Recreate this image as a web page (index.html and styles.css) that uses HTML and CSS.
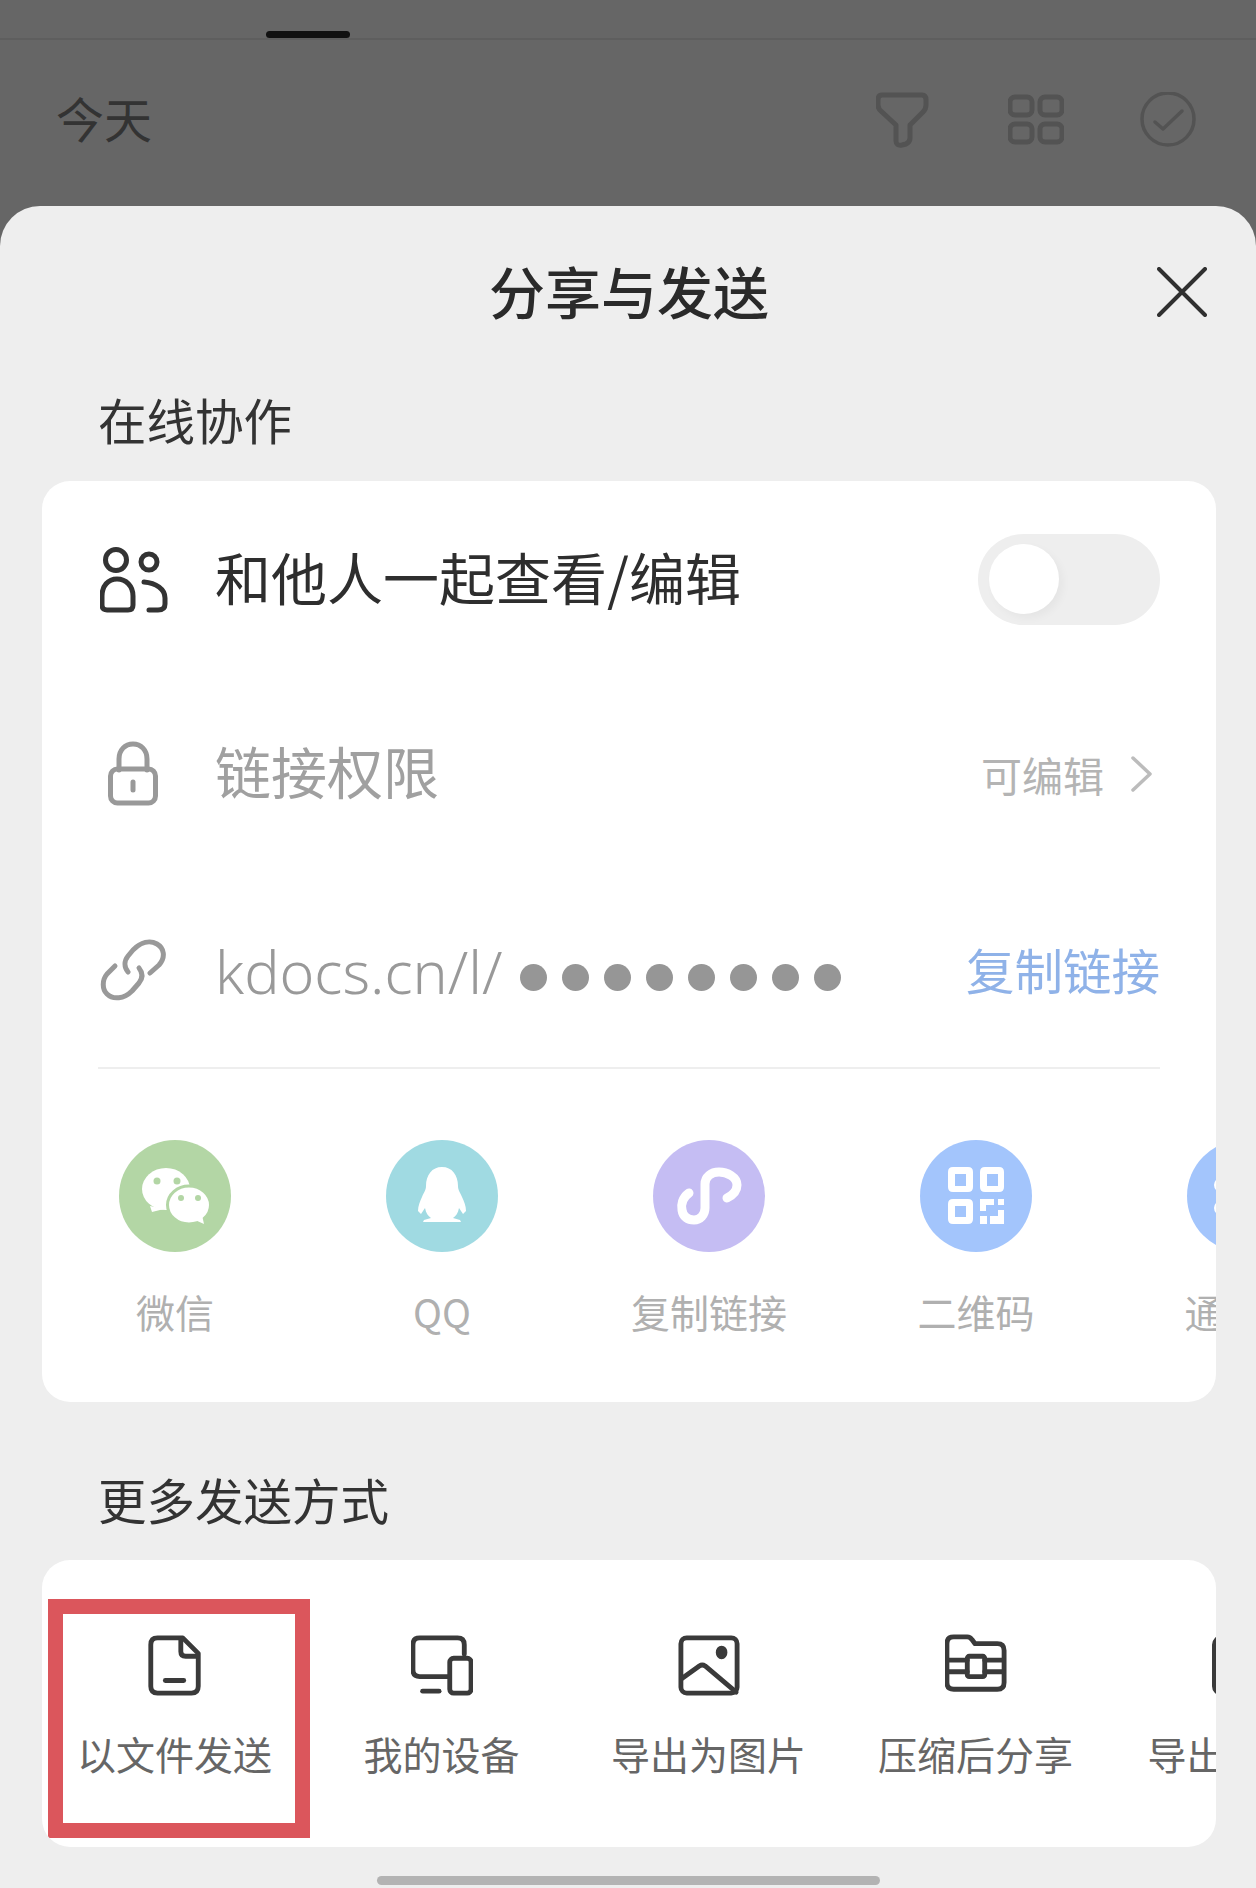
FILE: index.html
```html
<!DOCTYPE html>
<html lang="zh-CN">
<head>
<meta charset="UTF-8">
<meta name="viewport" content="width=device-width, initial-scale=1.0">
<title>分享与发送</title>
<link rel="stylesheet" href="styles.css">
</head>
<body>

<div class="backdrop">
    <div class="tab-strip"><span class="tab-mark"></span></div>
    <div class="top-bar">
        <span class="top-title">今天</span>
        <div class="top-icons">
            <svg class="top-icon thick" viewBox="0 0 56 56"><path d="M6 3H46Q50 3 50 8V13Q50 17 47 20L34 33V46Q34 50 30 52L26 53Q20 54 20 49V33L6 20Q2 17 2 13V8Q2 3 6 3Z"/></svg>
            <svg class="top-icon thick" viewBox="0 0 56 56"><rect x="2" y="5" width="22" height="18" rx="5"/><rect x="32" y="5" width="22" height="18" rx="5"/><rect x="2" y="32" width="22" height="18" rx="5"/><rect x="32" y="32" width="22" height="18" rx="5"/></svg>
            <svg class="top-icon" viewBox="0 0 56 56"><circle cx="28" cy="27" r="26"/><path d="M15 30L23 37L42 19"/></svg>
        </div>
    </div>
</div>

<section class="sheet">
    <header class="sheet-head">
        <h1>分享与发送</h1>
        <svg class="close-icon" viewBox="0 0 50 50"><path d="M2 2L48 48M48 2L2 48"/></svg>
    </header>

    <h2 class="section-title first">在线协作</h2>
    <div class="card">
        <div class="row row-first">
            <svg class="row-icon dark" viewBox="0 0 68 68"><circle cx="16" cy="14" r="10.5"/><circle cx="49" cy="16" r="8"/><path d="M2 59V50C2 40 8 33 17 33C26 33 33 40 33 50V59Q33 64 28 64H7Q2 64 2 59Z"/><path d="M44 36C56 37 65 43 65 52V58Q65 64 58 64H49"/></svg>
            <span class="row-label strong">和他人一起查看/编辑</span>
            <span class="toggle"><span class="knob"></span></span>
        </div>
        <div class="row row-second">
            <svg class="row-icon" viewBox="0 0 68 68"><path d="M19 30V19C19 10 25 4 33 4C41 4 47 10 47 19V30"/><rect x="10.5" y="29" width="45" height="34" rx="7"/><path d="M33 42V50"/></svg>
            <span class="row-label">链接权限</span>
            <span class="row-value">可编辑</span>
            <svg class="chevron" viewBox="0 0 22 36"><path d="M2 2L19 18L2 34"/></svg>
        </div>
        <div class="row row-third">
            <svg class="row-icon" viewBox="0 0 68 68"><path d="M50 34L59 26C66 18 64 9 57 5C50 1 41 3 33 11L28 17C24 22 24 28 28 33"/><path d="M15 27L7 35C2 41 2 50 7 55C13 61 24 60 32 52L39 44C43 39 43 34 39 29"/></svg>
            <span class="row-label link-text">kdocs.cn/l/</span>
            <span class="link-dots"><i></i><i></i><i></i><i></i><i></i><i></i><i></i><i></i></span>
            <span class="copy-link">复制链接</span>
        </div>
        <div class="divider"></div>
        <div class="share-row">
            <div class="share-item">
                <span class="share-circle green">
                    <svg viewBox="0 0 112 112"><ellipse cx="47" cy="49" rx="24" ry="21" fill="#fff"/><path d="M31 66L33 72L45 69Z" fill="#fff"/><ellipse cx="70" cy="65" rx="21.5" ry="19" fill="#fff" stroke="#b3d6a5" stroke-width="3"/><path d="M76 80L85 84L83 75Z" fill="#fff"/><circle cx="38" cy="41" r="3.5" fill="#b3d6a5"/><circle cx="58" cy="41" r="3.5" fill="#b3d6a5"/><circle cx="62" cy="58" r="3" fill="#b3d6a5"/><circle cx="79" cy="58" r="3" fill="#b3d6a5"/></svg>
                </span>
                <span class="share-label">微信</span>
            </div>
            <div class="share-item">
                <span class="share-circle teal">
                    <svg viewBox="0 0 112 112"><path d="M56 27C46 27 40 35 40 46C40 50 38 52 36 57C34 61 32 66 32 71L35 74L39 68C40 73 42 76 45 78L38 80L37 82H75L74 80L67 78C70 76 72 73 73 68L77 74L80 71C80 66 78 61 76 57C74 52 72 50 72 46C72 35 66 27 56 27Z" fill="#fff"/></svg>
                </span>
                <span class="share-label">QQ</span>
            </div>
            <div class="share-item">
                <span class="share-circle purple">
                    <svg viewBox="0 0 112 112"><path d="M36 53C29 58 28 65 29 70C30 77 35 80 41 80C47 80 52 75 52 68V44C52 37 58 32 66 32C74 32 84 37 84 45C84 52 78 56 74 58" fill="none" stroke="#fff" stroke-width="9" stroke-linecap="round"/></svg>
                </span>
                <span class="share-label">复制链接</span>
            </div>
            <div class="share-item">
                <span class="share-circle blue">
                    <svg viewBox="0 0 112 112"><g class="qr-marks"><path fill-rule="evenodd" d="M33 27H48Q53 27 53 32V47Q53 52 48 52H33Q28 52 28 47V32Q28 27 33 27ZM35 34V46H46V34Z"/><path fill-rule="evenodd" d="M65 27H79Q84 27 84 32V47Q84 52 79 52H65Q60 52 60 47V32Q60 27 65 27ZM67 34V46H78V34Z"/><path fill-rule="evenodd" d="M33 59H48Q53 59 53 64V79Q53 84 48 84H33Q28 84 28 79V64Q28 59 33 59ZM35 66V77H46V66Z"/><path d="M60 59H74V65H66V71H60ZM78 59H84V65H78ZM78 70H84V84H70V76H78ZM60 76H67V84H60Z"/></g></svg>
                </span>
                <span class="share-label">二维码</span>
            </div>
            <div class="share-item">
                <span class="share-circle blue">
                    <svg viewBox="0 0 112 112"><circle cx="34" cy="45" r="7" fill="#fff"/><circle cx="34" cy="68" r="7" fill="#fff"/></svg>
                </span>
                <span class="share-label">通讯录</span>
            </div>
        </div>
    </div>

    <h2 class="section-title second">更多发送方式</h2>
    <div class="card more-card">
        <div class="more-row">
            <div class="more-item">
                <svg class="more-icon" viewBox="0 0 64 64"><path d="M14 4H40L56 20V54Q56 61 49 61H14Q7 61 7 54V11Q7 4 14 4Z"/><path d="M38 5V18Q38 23 43 23H55"/><path d="M22 48H41"/></svg>
                <span class="more-label">以文件发送</span>
            </div>
            <div class="more-item">
                <svg class="more-icon" viewBox="0 0 64 64"><path d="M55 21V11Q55 4 48 4H9Q2 4 2 11V37Q2 44 9 44H38"/><rect x="40" y="25" width="22" height="36" rx="4"/><path d="M12 59H29"/></svg>
                <span class="more-label">我的设备</span>
            </div>
            <div class="more-item">
                <svg class="more-icon" viewBox="0 0 64 64"><rect x="3" y="4" width="58" height="57" rx="6"/><path d="M4 46L22 33Q25 31 28 33L60 60"/><ellipse cx="45" cy="19" rx="3.5" ry="4.5" class="solid"/></svg>
                <span class="more-label">导出为图片</span>
            </div>
            <div class="more-item">
                <svg class="more-icon" viewBox="0 0 64 64"><path d="M9 3H23Q26 3 28 6L31 10H54Q61 10 61 17V50Q61 57 54 57H9Q2 57 2 50V10Q2 3 9 3Z"/><rect x="23" y="23" width="18" height="21" rx="2"/><path d="M3 27H23M3 39H23M41 27H60M41 39H60"/></svg>
                <span class="more-label">压缩后分享</span>
            </div>
            <div class="more-item">
                <svg class="more-icon" viewBox="0 0 64 64"><rect x="2.5" y="4" width="50" height="57" rx="7"/></svg>
                <span class="more-label">导出为PDF</span>
            </div>
        </div>
        <div class="highlight-box"></div>
    </div>

    <div class="home-bar"></div>
</section>

</body>
</html>
```

FILE: styles.css
```css
* {
    box-sizing: border-box;
}

html, body {
    margin: 0;
    padding: 0;
}

body {
    width: 1256px;
    height: 1888px;
    overflow: hidden;
    background-color: #666666;
    font-family: "Noto Sans CJK SC", "Noto Sans", sans-serif;
}

svg {
    display: block;
    fill: none;
}

/* dimmed page behind the sheet */
.backdrop {
    height: 206px;
}

.tab-strip {
    height: 40px;
    padding: 31px 0 0 266px;
    border-bottom: 2px solid #5e5e5e;
}

.tab-mark {
    display: block;
    width: 84px;
    height: 7px;
    border-radius: 4px;
    background-color: #111111;
}

.top-bar {
    display: flex;
    align-items: center;
    justify-content: space-between;
    height: 160px;
    padding: 0 60px 0 56px;
}

.top-title {
    margin-bottom: 6px;
    font-size: 48px;
    line-height: 60px;
    color: #333333;
}

.top-icons {
    display: flex;
    gap: 76px;
}

.top-icon {
    width: 56px;
    height: 56px;
    stroke: #535353;
    stroke-width: 3.5;
    stroke-linecap: round;
    stroke-linejoin: round;
}

.top-icon.thick {
    stroke-width: 5;
}

/* bottom sheet */
.sheet {
    position: relative;
    height: 1682px;
    padding: 0 40px 0 42px;
    border-radius: 40px 40px 0 0;
    background-color: #eeeeee;
}

.sheet-head {
    display: flex;
    align-items: center;
    justify-content: center;
    position: relative;
    height: 175px;
}

.sheet-head h1 {
    margin: 0 0 7px;
    font-size: 56px;
    line-height: 70px;
    font-weight: 500;
    color: #2a2a2a;
}

.close-icon {
    position: absolute;
    top: 61px;
    right: 9px;
    width: 50px;
    height: 50px;
    stroke: #2f2f2f;
    stroke-width: 4;
    stroke-linecap: round;
}

.section-title {
    margin: 0;
    padding-left: 56px;
    font-size: 48.5px;
    line-height: 60px;
    font-weight: 400;
    color: #333333;
}

.section-title.first {
    padding-top: 8px;
    height: 100px;
}

.section-title.second {
    padding-top: 67px;
    height: 158px;
}

.card {
    width: 1174px;
    border-radius: 28px;
    background-color: #ffffff;
    overflow: hidden;
    position: relative;
}

.row {
    display: flex;
    align-items: center;
    padding: 0 56px 0 58px;
}

.row-first {
    height: 198px;
}

.row-second {
    height: 200px;
    padding-bottom: 10px;
}

.row-third {
    height: 188px;
}

.row-icon {
    width: 68px;
    height: 68px;
    margin-right: 47px;
    flex-shrink: 0;
    stroke: #999999;
    stroke-width: 5;
    stroke-linecap: round;
    stroke-linejoin: round;
}

.row-icon.dark {
    stroke: #333333;
}

.row-label {
    margin-bottom: 8px;
    font-size: 56px;
    line-height: 70px;
    color: #a0a0a0;
}

.row-label.strong {
    color: #2e2e2e;
}

.toggle {
    margin-left: auto;
    margin-bottom: 2px;
    display: flex;
    align-items: center;
    width: 182px;
    height: 91px;
    padding-left: 11px;
    border-radius: 46px;
    background-color: #eeeeee;
}

.knob {
    width: 70px;
    height: 70px;
    border-radius: 50%;
    background-color: #ffffff;
    box-shadow: 4px 4px 8px rgba(0, 0, 0, 0.04);
}

.row-value {
    margin-left: auto;
    margin-right: 27px;
    font-size: 41px;
    line-height: 50px;
    color: #b4b4b4;
}

.chevron {
    width: 22px;
    height: 36px;
    margin-right: 7px;
    stroke: #bcbcbc;
    stroke-width: 3.5;
    stroke-linecap: round;
    stroke-linejoin: round;
}

.link-text {
    margin-bottom: 5px;
    font-family: "Noto Sans", sans-serif;
    font-size: 59px;
    font-weight: 300;
    color: #999999;
}

.link-dots {
    display: flex;
    gap: 15px;
    margin-left: 18px;
    margin-top: 8px;
}

.link-dots i {
    width: 27px;
    height: 27px;
    border-radius: 50%;
    background-color: #969696;
}

.copy-link {
    margin-left: auto;
    margin-bottom: 8px;
    font-size: 48.5px;
    line-height: 60px;
    color: #8fb2e8;
}

.divider {
    height: 2px;
    margin: 0 56px 0 56px;
    background-color: #eeeeee;
}

.share-row,
.more-row {
    display: flex;
}

.share-row {
    height: 333px;
    padding-top: 71px;
    margin-left: -0.5px;
}

.share-item,
.more-item {
    display: flex;
    flex-direction: column;
    align-items: center;
    flex: 0 0 267px;
}

.share-circle {
    width: 112px;
    height: 112px;
    border-radius: 50%;
}

.green {
    background-color: #b3d6a5;
}

.teal {
    background-color: #a0dae2;
}

.purple {
    background-color: #c5bdf3;
}

.blue {
    background-color: #a3c5fc;
}

.qr-marks {
    fill: #ffffff;
}

.share-label {
    margin-top: 35px;
    font-size: 39px;
    line-height: 48px;
    white-space: nowrap;
    color: #b0b0b0;
}

.more-card {
    height: 287px;
}

.more-row {
    padding-top: 74px;
    margin-left: -1px;
}

.more-icon {
    width: 62px;
    height: 62px;
    stroke: #3a3a3a;
    stroke-width: 5;
    stroke-linecap: round;
    stroke-linejoin: round;
}

.more-icon .solid {
    fill: #3a3a3a;
}

.more-label {
    margin-top: 33px;
    font-size: 39px;
    line-height: 48px;
    white-space: nowrap;
    color: #666666;
}

/* red annotation drawn over the first item */
.highlight-box {
    position: absolute;
    top: 39px;
    left: 6px;
    width: 262px;
    height: 239px;
    border: 15px solid #db565c;
}

.home-bar {
    position: absolute;
    top: 1670px;
    left: 377px;
    width: 503px;
    height: 9px;
    border-radius: 5px;
    background-color: #b3b3b3;
}
```
